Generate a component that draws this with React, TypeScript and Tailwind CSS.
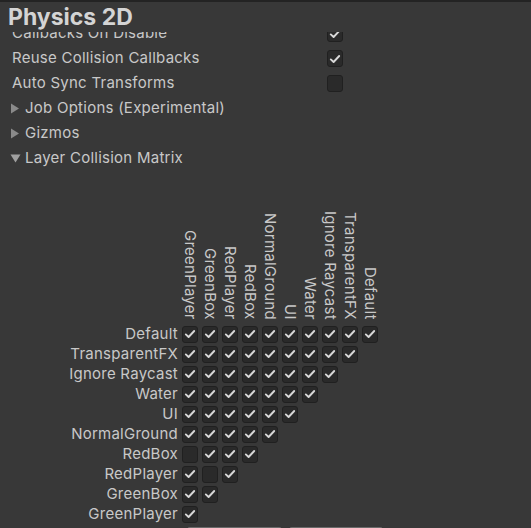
import React from 'react';

const layers = [
  'Default',
  'TransparentFX',
  'Ignore Raycast',
  'Water',
  'UI',
  'NormalGround',
  'RedBox',
  'RedPlayer',
  'GreenBox',
  'GreenPlayer',
];

// columns are the layers in reverse order
const columns = [...layers].reverse();

// [row, col] pairs that are switched off
const off: Record<string, boolean> = {
  'RedBox:GreenPlayer': true,
  'RedPlayer:GreenBox': true,
};

const font = { fontFamily: 'Inter, "Noto Sans", sans-serif' };

const Check: React.FC<{ on: boolean }> = ({ on }) => (
  <div className="w-4 h-[17px] shrink-0 rounded-[3px] bg-[#2a2a2a] border border-[#202020] flex items-center justify-center">
    {on && (
      <svg width="12" height="12" viewBox="0 0 12 12">
        <polyline
          points="1.8,6.4 4.6,9 10.2,3"
          fill="none"
          stroke="#d8d8d8"
          strokeWidth="1.9"
          strokeLinecap="round"
          strokeLinejoin="round"
        />
      </svg>
    )}
  </div>
);

const Arrow: React.FC<{ open?: boolean }> = ({ open }) => (
  <svg width="11" height="11" viewBox="0 0 11 11" className="mr-[4px] shrink-0">
    {open ? (
      <polygon points="0.5,1.5 10.5,1.5 5.5,9.5" fill="#a0a0a0" />
    ) : (
      <polygon points="1,0.5 9,5.5 1,10.5" fill="#8a8a8a" />
    )}
  </svg>
);

const SettingRow: React.FC<{ label: string; value: boolean }> = ({ label, value }) => (
  <div className="h-[25px] flex items-center pl-3 pr-[188px]">
    <span className="flex-1">{label}</span>
    <Check on={value} />
  </div>
);

const FoldRow: React.FC<{ label: string; open?: boolean }> = ({ label, open }) => (
  <div className="h-[25px] flex items-center pl-[10px]">
    <Arrow open={open} />
    <span>{label}</span>
  </div>
);

export default function App() {
  return (
    <div
      className="w-[531px] h-[528px] bg-[#383838] border-t-2 border-[#232323] text-[15px] tracking-[0.25px] text-[#c8c8c8] flex flex-col overflow-hidden"
      style={font}
    >
      <div className="h-[30px] shrink-0 pl-2 pt-[1px] text-[23px] font-bold tracking-normal text-[#d4d4d4] leading-[28px] relative z-10 bg-[#383838]">
        Physics 2D
      </div>

      <div className="flex-1 overflow-hidden">
        <div className="-mt-[11px]">
          <SettingRow label="Callbacks On Disable" value />
          <SettingRow label="Reuse Collision Callbacks" value />
          <SettingRow label="Auto Sync Transforms" value={false} />
          <FoldRow label="Job Options (Experimental)" />
          <FoldRow label="Gizmos" />
          <FoldRow label="Layer Collision Matrix" open />

          {/* column headers */}
          <div className="h-[153px] flex items-end gap-1 pl-[182px] pb-[4px]">
            {columns.map((c) => (
              <div key={c} className="w-4 flex justify-center">
                <span className="leading-4 whitespace-nowrap [writing-mode:vertical-rl]">{c}</span>
              </div>
            ))}
          </div>

          {/* matrix rows */}
          <div className="flex flex-col">
            {layers.map((row, i) => (
              <div key={row} className="h-5 flex items-center">
                <span className="w-[178px] text-right whitespace-nowrap leading-5">{row}</span>
                <div className="flex gap-1 ml-1">
                  {columns.slice(0, layers.length - i).map((col) => (
                    <Check key={col} on={!off[`${row}:${col}`]} />
                  ))}
                </div>
              </div>
            ))}
          </div>

          <div className="flex gap-[7px] pl-[187px] mt-[3px]">
            <div className="w-[95px] h-5 rounded-[3px] bg-[#585858] border border-[#303030] border-t-[#6a6a6a]" />
            <div className="w-[94px] h-5 rounded-[3px] bg-[#585858] border border-[#303030] border-t-[#6a6a6a]" />
          </div>
        </div>
      </div>
    </div>
  );
}
